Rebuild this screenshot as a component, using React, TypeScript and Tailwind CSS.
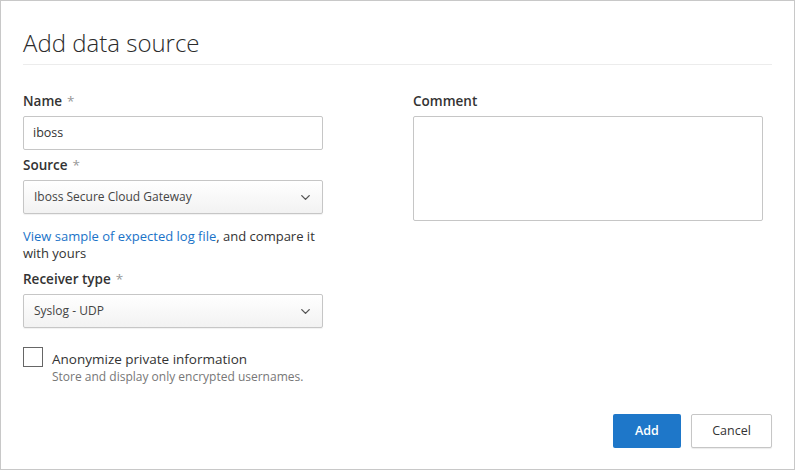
import { ChevronDown } from "lucide-react";

const font = { fontFamily: '"Open Sans", "Noto Sans", sans-serif' };

function Label({ text, required }: { text: string; required?: boolean }) {
  return (
    <div className="h-[18px] leading-[18px] text-[13.5px] font-semibold text-[#333]">
      {text}
      {required && <span className="ml-[5px] font-normal text-[#999]">*</span>}
    </div>
  );
}

function Select({ value }: { value: string }) {
  return (
    <div className="mt-[6px] flex h-[34px] w-[300px] items-center justify-between rounded-[2px] border border-[#c6c6c6] bg-gradient-to-b from-white to-[#f2f2f2] pl-[10px] pr-[9px] shadow-[0_1px_1px_rgba(0,0,0,0.06)]">
      <span className="text-[12px] font-medium text-[#444]">{value}</span>
      <ChevronDown size={15} strokeWidth={2.2} className="text-[#555]" />
    </div>
  );
}

export default function App() {
  return (
    <div style={font} className="flex h-[470px] w-[795px] flex-col border border-[#c8c8c8] bg-white px-[22px] text-[#333]">
      <div className="border-b border-[#ececec] pt-[26px] pb-[6px]">
        <h1 className="text-[24px] font-light leading-[31px] text-[#2b2b2b]">Add data source</h1>
      </div>

      <div className="mt-[27px] flex gap-[90px]">
        <div className="w-[300px]">
          <Label text="Name" required />
          <div className="mt-[6px] flex h-[34px] items-center rounded-[2px] border border-[#c6c6c6] px-[9px] text-[12.5px] text-[#333]">
            iboss
          </div>

          <div className="mt-[6px]">
            <Label text="Source" required />
          </div>
          <Select value="Iboss Secure Cloud Gateway" />

          <p className="mt-[14px] text-[13px] leading-[17px] text-[#333]">
            <a className="text-[#1a73c8]">View sample of expected log file</a>, and compare it
            with yours
          </p>

          <div className="mt-[8px]">
            <Label text="Receiver type" required />
          </div>
          <Select value="Syslog - UDP" />

          <div className="mt-[19px] flex gap-[9px]">
            <div className="h-[20px] w-[20px] shrink-0 border border-[#666] bg-white" />
            <div className="pt-[3px]">
              <div className="text-[13.5px] leading-[18px] text-[#333]">Anonymize private information</div>
              <div className="text-[12px] leading-[17px] text-[#777]">Store and display only encrypted usernames.</div>
            </div>
          </div>
        </div>

        <div className="w-[350px]">
          <Label text="Comment" />
          <div className="mt-[6px] h-[105px] rounded-[2px] border border-[#c6c6c6] bg-white" />
        </div>
      </div>

      <div className="mt-auto mb-[21px] flex justify-end gap-[10px]">
        <button className="h-[34px] w-[68px] rounded-[2px] bg-[#1e77c9] text-[12.5px] font-semibold text-white">
          Add
        </button>
        <button className="h-[34px] w-[81px] rounded-[2px] border border-[#c6c6c6] bg-white text-[12.5px] text-[#333] shadow-[0_1px_1px_rgba(0,0,0,0.08)]">
          Cancel
        </button>
      </div>
    </div>
  );
}
